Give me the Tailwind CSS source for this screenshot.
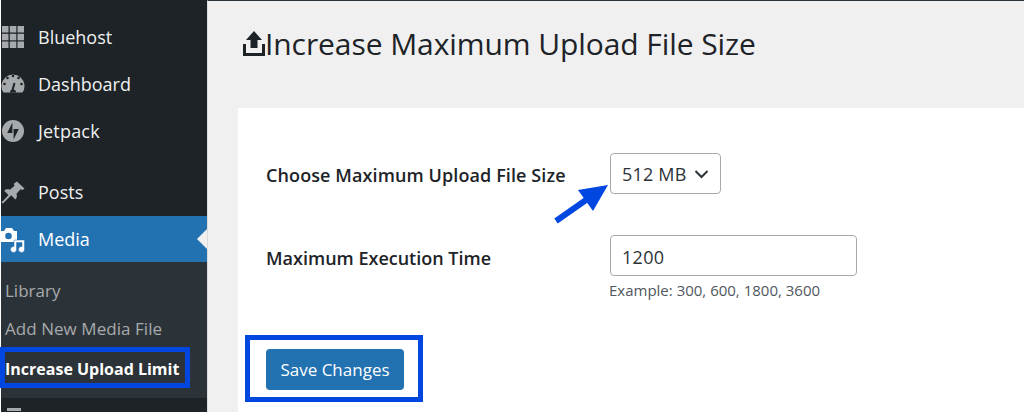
<!DOCTYPE html>
<html>
<head>
<meta charset="utf-8">
<script src="https://cdn.jsdelivr.net/npm/@tailwindcss/browser@4"></script>
</head>
<body class="m-0 overflow-hidden bg-[#f0f0f1]">
<div class="relative flex h-[412px] w-[1024px] overflow-hidden font-['Open_Sans','Noto_Sans',sans-serif]">
  <aside class="flex h-full w-[207px] shrink-0 flex-col border-l border-l-white bg-[#1d2327] text-[18px] text-[#f0f0f1]">
    <a class="mt-[14px] flex h-[47px] items-center"><span class="flex w-[37px] shrink-0 justify-start">
      <svg class="h-[24px] w-[24px] -mt-[2px]" viewBox="0 0 24 24" fill="#a7aaad"><rect x="1" y="1" width="6.500" height="6.500"/><rect x="8.800" y="1" width="6.500" height="6.500"/><rect x="16.500" y="1" width="6.500" height="6.500"/><rect x="1" y="8.800" width="6.500" height="6.500"/><rect x="8.800" y="8.800" width="6.500" height="6.500"/><rect x="16.500" y="8.800" width="6.500" height="6.500"/><rect x="1" y="16.500" width="6.500" height="6.500"/><rect x="8.800" y="16.500" width="6.500" height="6.500"/><rect x="16.500" y="16.500" width="6.500" height="6.500"/></svg></span><span>Bluehost</span></a>
    <a class="flex h-[47px] items-center"><span class="flex w-[37px] shrink-0">
      <svg class="h-[24px] w-[24px] -mt-[2px]" viewBox="0 0 24 24"><path d="M2.500 21A11.500 11.500 0 1 1 21.500 21z" fill="#a7aaad" transform="translate(0 -0.500)"/><path d="M11.500 18l2-7" stroke="#1d2327" stroke-width="2"/><path d="M9 20.500a3 3 0 1 1 6 0z" fill="#1d2327"/><g fill="#1d2327"><circle cx="12" cy="4" r="1.300"/><circle cx="6.500" cy="6" r="1.300"/><circle cx="17.500" cy="6" r="1.300"/><circle cx="3.500" cy="12" r="1.300"/><circle cx="20.500" cy="12" r="1.300"/></g></svg></span><span>Dashboard</span></a>
    <a class="flex h-[47px] items-center"><span class="flex w-[37px] shrink-0">
      <svg class="h-[24px] w-[24px] -mt-[2px]" viewBox="0 0 24 24"><circle cx="12" cy="12" r="11" fill="#a7aaad"/><path d="M11.400 3.500V14H6.200zM12.600 20.500V10h5.200z" fill="#1d2327"/></svg></span><span class="tracking-[0.2px]">Jetpack</span></a>
    <a class="mt-[14px] flex h-[47px] items-center"><span class="flex w-[37px] shrink-0">
      <svg class="h-[24px] w-[24px]" viewBox="0 0 24 24" fill="#a7aaad"><path d="M16 0.500l7.500 7-2 1.500-2-.8-4 4.500c.8 2.400.3 4.300-1 5.800l-4.300-4.300L2 22.500l-1.500-1 7-7.500-4.300-4.300c1.500-1.300 3.600-1.800 5.800-1l4.500-4-.8-2z"/></svg></span><span>Posts</span></a>
    <a class="relative flex h-[46px] items-center bg-[#2271b1] text-white"><span class="flex w-[37px] shrink-0">
      <svg class="h-[27px] w-[27px] -ml-[1px]" viewBox="0 0 27 27"><path d="M0 5h4l2-3h6l2 3h3v11H0z" fill="#fff"/><circle cx="8.500" cy="10" r="3.300" fill="#2271b1"/><path d="M14 14h10.500v9.500a3 3 0 1 1-2.500-3v-4h-5.500v7a3 3 0 1 1-2.500-3z" fill="#fff" stroke="#2271b1" stroke-width="0.500"/></svg></span><span>Media</span>
      <span class="absolute right-0 top-1/2 h-0 w-0 -translate-y-1/2 border-y-[10px] border-r-[10px] border-y-transparent border-r-[#f0f0f1]"></span></a>
    <div class="flex h-[136px] flex-col bg-[#2c3338] pl-[4px] text-[17px] text-[#a7aaad]">
      <a class="mt-[10px] flex h-[38px] items-center">Library</a>
      <a class="flex h-[38px] items-center tracking-[0.05px]">Add New Media File</a>
      <a class="flex h-[41px] items-center text-[16px] font-bold text-white">Increase Upload Limit</a>
    </div>
    <div class="flex h-[13px] items-end"><span class="ml-[6px] h-[3px] w-[14px] bg-[#a7aaad]"></span></div>
  </aside>
  <main class="flex min-w-0 flex-1 flex-col border-l border-t border-l-[#dcdcde] border-t-[#2c3338] text-[#1d2327]">
    <h1 class="flex h-[107px] items-center pb-[22px] pl-[35px] text-[30px] font-normal tracking-[-0.08px]">
      <svg class="-mt-[1px] h-[25px] w-[22px] shrink-0" viewBox="0 0 22 25" fill="#1d2327"><path d="M11 0l8 9h-4.500v8h-7V9H3z"/><path d="M0 13h3v9h16v-9h3v12H0z"/></svg>
      <span>Increase Maximum Upload File Size</span>
    </h1>
    <section class="ml-[30px] flex-1 bg-white pl-[28px]">
      <div class="mt-[45px] flex h-[41px] items-center">
        <label class="w-[344px] shrink-0 pt-[3px] text-[18px] font-semibold tracking-[0.1px]">Choose Maximum Upload File Size</label>
        <div class="flex h-[41px] w-[111px] items-center justify-between rounded-[4px] border border-[#a7aaad] bg-white px-[11px] pt-[1px] text-[18px] tracking-[0.2px] text-[#2c3338]">
          <span>512 MB</span>
          <svg class="h-[10px] w-[15px]" viewBox="0 0 15 10" fill="none" stroke="#2c3338" stroke-width="2"><path d="M1.500 2l6 6 6-6"/></svg>
        </div>
      </div>
      <div class="mt-[41px] flex items-start">
        <label class="flex h-[41px] w-[344px] shrink-0 items-center pt-[5px] text-[18px] font-semibold">Maximum Execution Time</label>
        <div>
          <div class="flex h-[41px] w-[247px] items-center rounded-[4px] border border-[#a7aaad] bg-white pl-[11px] pt-[3px] text-[18px] tracking-[0.3px] text-[#2c3338]">1200</div>
          <p class="-ml-[1px] mt-[3px] text-[15px] text-[#50575e]">Example: 300, 600, 1800, 3600</p>
        </div>
      </div>
      <button class="mt-[47px] flex h-[41px] w-[138px] items-center justify-center rounded-[4px] bg-[#2271b1] pt-[1px] text-[17px] text-white">Save Changes</button>
    </section>
  </main>
  <div class="absolute left-0 top-[347px] h-[41px] w-[190px] border-[5px] border-[#0047e1]"></div>
  <div class="absolute left-[245px] top-[335px] h-[67px] w-[178px] border-[5px] border-[#0047e1]"></div>
  <svg class="absolute left-[550px] top-[180px] h-[50px] w-[62px]" viewBox="0 0 62 50"><path d="M6 41L36 20" stroke="#0047e1" stroke-width="6"/><path d="M58 5L28 10L43 31z" fill="#0047e1"/></svg>
</div>
</body>
</html>
